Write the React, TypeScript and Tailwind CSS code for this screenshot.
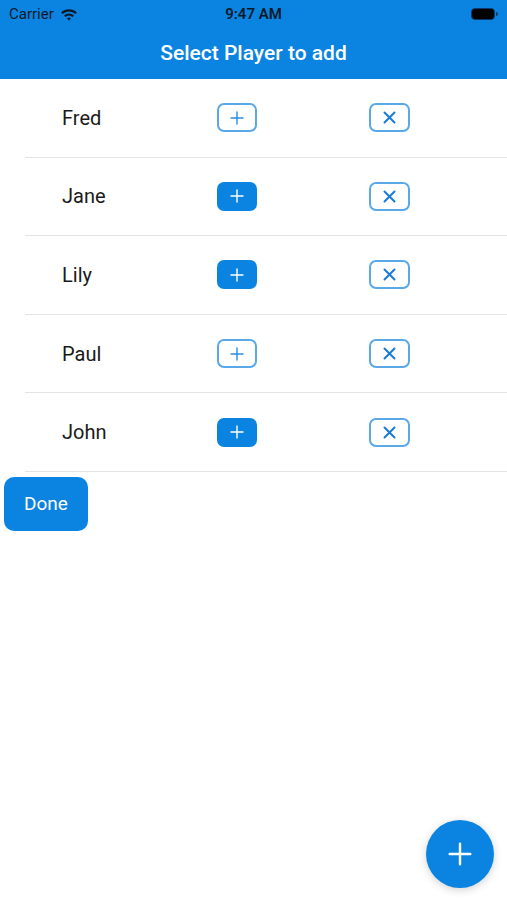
import React from "react";

const players = [
  { name: "Fred", added: false },
  { name: "Jane", added: true },
  { name: "Lily", added: true },
  { name: "Paul", added: false },
  { name: "John", added: true },
];

function PlusIcon({ size = 14, className = "" }: { size?: number; className?: string }) {
  return (
    <svg width={size} height={size} viewBox="0 0 14 14" className={className}>
      <path d="M7 1v12M1 7h12" stroke="currentColor" strokeWidth="1.4" strokeLinecap="round" fill="none" />
    </svg>
  );
}

function CrossIcon() {
  return (
    <svg width="13" height="13" viewBox="0 0 13 13">
      <path d="M1.5 1.5l10 10M11.5 1.5l-10 10" stroke="currentColor" strokeWidth="2" strokeLinecap="round" fill="none" />
    </svg>
  );
}

function StatusBar() {
  return (
    <div className="h-[28px] flex items-center justify-between px-[9px] text-[#0b1a2a]">
      <div className="flex items-center gap-[6px] text-[15px] w-[120px]">
        <span>Carrier</span>
        <svg width="18" height="13" viewBox="0 0 18 13">
          <path d="M1 4.5a11.5 11.5 0 0 1 16 0l-1.6 1.6a9.2 9.2 0 0 0-12.8 0z" fill="currentColor" />
          <path d="M4 7.5a7.2 7.2 0 0 1 10 0l-1.6 1.6a5 5 0 0 0-6.8 0z" fill="currentColor" />
          <path d="M7 10.5a2.8 2.8 0 0 1 4 0L9 12.5z" fill="currentColor" />
        </svg>
      </div>
      <span className="text-[15px] font-semibold">9:47 AM</span>
      <div className="w-[120px] flex justify-end items-center">
        <div className="w-[24px] h-[12px] rounded-[4px] bg-black border border-[#0b3a6a]" />
        <div className="w-[2px] h-[4px] bg-[#0b3a6a] rounded-r-sm ml-[1px]" />
      </div>
    </div>
  );
}

export default function App() {
  return (
    <div className="w-[507px] h-[900px] bg-white relative overflow-hidden" style={{ fontFamily: "Roboto, 'Liberation Sans', sans-serif" }}>
      <div className="bg-[#0a84e0]">
        <StatusBar />
        <div className="h-[51px] flex items-center justify-center text-white text-[21px] font-medium pt-[1px]">
          Select Player to add
        </div>
      </div>

      <div>
        {players.map((p) => (
          <div key={p.name} className="ml-[25px] h-[78.6px] flex items-center border-b border-[#e4e4e4]">
            <span className="w-[192px] pl-[37px] text-[20px] text-[#1a1a1a]">{p.name}</span>
            <button
              className={
                p.added
                  ? "w-[40px] h-[29px] rounded-[7px] bg-[#0a84e0] text-white flex items-center justify-center"
                  : "w-[40px] h-[29px] rounded-[7px] border-2 border-[#5aa8e8] text-[#2a8de0] flex items-center justify-center"
              }
            >
              <PlusIcon />
            </button>
            <button className="ml-[112px] w-[41px] h-[29px] rounded-[7px] border-2 border-[#5aa8e8] text-[#1a7ad8] flex items-center justify-center">
              <CrossIcon />
            </button>
          </div>
        ))}
      </div>

      <div className="pt-[5px] pl-[4px]">
        <button className="w-[84px] h-[54px] rounded-[10px] bg-[#0a84e0] text-white text-[19px] flex items-center justify-center">
          Done
        </button>
      </div>

      <button className="absolute left-[426px] top-[820px] w-[68px] h-[68px] rounded-full bg-[#0a84e0] text-white flex items-center justify-center shadow-[0_2px_8px_rgba(0,0,0,0.18)]">
        <PlusIcon size={24} />
      </button>
    </div>
  );
}
